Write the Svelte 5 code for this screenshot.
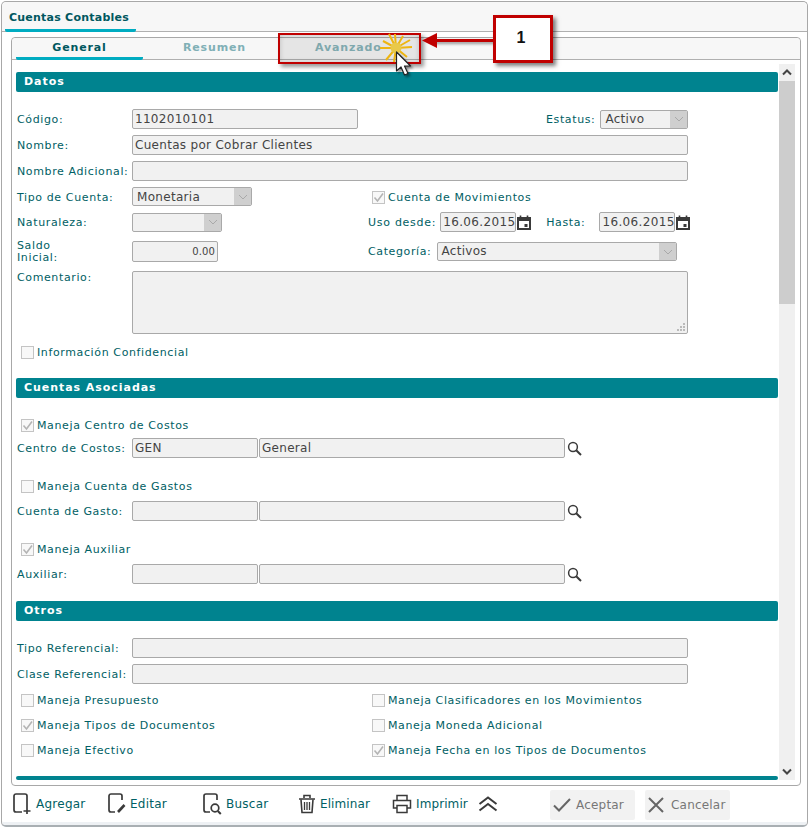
<script>
  const iconC = '#3a3a3a';
</script>

{#snippet check(label, on)}
  <label class="chk">
    <span class="box">
      {#if on}
        <svg width="13" height="13" viewBox="0 0 13 13"><path d="M2.5 6.5 L5.5 10 L11 2.5" fill="none" stroke="#b4b4b4" stroke-width="1.6"/></svg>
      {/if}
    </span>
    <span>{label}</span>
  </label>
{/snippet}

{#snippet caret()}
  <span class="caret"><svg width="10" height="6" viewBox="0 0 10 6"><path d="M1 1 L5 5 L9 1" fill="none" stroke="#a9a9a9" stroke-width="1"/></svg></span>
{/snippet}

{#snippet cal()}
  <svg class="cal" width="14" height="15" viewBox="0 0 14 15">
    <path d="M1 3h12v11H1z" fill="none" stroke={iconC} stroke-width="2"/>
    <path d="M1 3h12v3H1z" fill={iconC}/>
    <path d="M3.5 0.5v3M10.5 0.5v3" stroke={iconC} stroke-width="1.6"/>
    <rect x="7.5" y="9" width="3" height="3" fill={iconC}/>
  </svg>
{/snippet}

{#snippet lens()}
  <svg class="lens" width="15" height="15" viewBox="0 0 15 15">
    <circle cx="6" cy="6" r="4.4" fill="none" stroke={iconC} stroke-width="1.5"/>
    <path d="M9.2 9.2 L14 14" stroke={iconC} stroke-width="2"/>
  </svg>
{/snippet}

<div class="window">
  <div class="tabs-top"><span class="top-tab">Cuentas Contables</span></div>

  <div class="panel">
    <div class="tabs">
      <span class="tab active">General</span>
      <span class="tab res">Resumen</span>
      <span class="tab adv">Avanzado</span>
    </div>

    <div class="scrollarea">
      <div class="content">
        <h3 class="bar">Datos</h3>

        <div class="row first">
          <span class="lab">Código:</span>
          <span class="in w226">1102010101</span>
          <span class="lab est">Estatus:</span>
          <span class="in sel w88 short">Activo{@render caret()}</span>
        </div>
        <div class="row"><span class="lab">Nombre:</span><span class="in w556">Cuentas por Cobrar Clientes</span></div>
        <div class="row"><span class="lab">Nombre Adicional:</span><span class="in w556"></span></div>
        <div class="row short-row">
          <span class="lab">Tipo de Cuenta:</span>
          <span class="in sel w120 short">Monetaria{@render caret()}</span>
          <span class="rightcol">{@render check('Cuenta de Movimientos', true)}</span>
        </div>
        <div class="row nat">
          <span class="lab">Naturaleza:</span>
          <span class="in sel w90 short">{@render caret()}</span>
          <span class="lab uso">Uso desde:</span>
          <span class="in date">16.06.2015</span>{@render cal()}
          <span class="lab hasta">Hasta:</span>
          <span class="in date">16.06.2015</span>{@render cal()}
        </div>
        <div class="row saldo">
          <span class="lab two">Saldo<br />Inicial:</span>
          <span class="in num">0.00</span>
          <span class="lab cat">Categoría:</span>
          <span class="in sel w240 short">Activos{@render caret()}</span>
        </div>
        <div class="row area-row">
          <span class="lab">Comentario:</span>
          <span class="in w556 area">
            <svg class="grip" width="10" height="10" viewBox="0 0 10 10" fill="#bbb"><rect x="7" y="1" width="2" height="2"/><rect x="4" y="4" width="2" height="2"/><rect x="7" y="4" width="2" height="2"/><rect x="1" y="7" width="2" height="2"/><rect x="4" y="7" width="2" height="2"/><rect x="7" y="7" width="2" height="2"/></svg>
          </span>
        </div>
        <div class="chkrow conf">{@render check('Información Confidencial', false)}</div>

        <h3 class="bar asoc">Cuentas Asociadas</h3>

        <div class="chkrow m1">{@render check('Maneja Centro de Costos', true)}</div>
        <div class="row tight">
          <span class="lab">Centro de Costos:</span>
          <span class="in w126">GEN</span><span class="in w306">General</span>{@render lens()}
        </div>
        <div class="chkrow m2">{@render check('Maneja Cuenta de Gastos', false)}</div>
        <div class="row tight2">
          <span class="lab">Cuenta de Gasto:</span>
          <span class="in w126"></span><span class="in w306"></span>{@render lens()}
        </div>
        <div class="chkrow m3">{@render check('Maneja Auxiliar', true)}</div>
        <div class="row tight2">
          <span class="lab">Auxiliar:</span>
          <span class="in w126"></span><span class="in w306"></span>{@render lens()}
        </div>

        <h3 class="bar otros">Otros</h3>

        <div class="row first"><span class="lab">Tipo Referencial:</span><span class="in w556"></span></div>
        <div class="row"><span class="lab">Clase Referencial:</span><span class="in w556"></span></div>
        <div class="two-col c1">
          {@render check('Maneja Presupuesto', false)}
          {@render check('Maneja Clasificadores en los Movimientos', false)}
        </div>
        <div class="two-col">
          {@render check('Maneja Tipos de Documentos', true)}
          {@render check('Maneja Moneda Adicional', false)}
        </div>
        <div class="two-col">
          {@render check('Maneja Efectivo', false)}
          {@render check('Maneja Fecha en los Tipos de Documentos', true)}
        </div>
        <div class="bar last"></div>
      </div>

      <div class="scrollbar">
        <span class="sbtn"><svg width="10" height="7" viewBox="0 0 10 7"><path d="M1 5.5 L5 1.5 L9 5.5" fill="none" stroke="#444" stroke-width="2"/></svg></span>
        <span class="thumb"></span>
        <span class="track"></span>
        <span class="sbtn"><svg width="10" height="7" viewBox="0 0 10 7"><path d="M1 1.5 L5 5.5 L9 1.5" fill="none" stroke="#444" stroke-width="2"/></svg></span>
      </div>
    </div>
  </div>

  <div class="toolbar">
    <span class="act a-add">
      <svg width="18" height="22" viewBox="0 0 18 22"><path d="M14 14V3a2 2 0 0 0-2-2H3a2 2 0 0 0-2 2v14a2 2 0 0 0 2 2h6" fill="none" stroke={iconC} stroke-width="1.7"/><path d="M14 14v7M10.500 18h7" stroke={iconC} stroke-width="1.7"/></svg>
      Agregar
    </span>
    <span class="act a-edit">
      <svg width="18" height="22" viewBox="0 0 18 22"><path d="M14 7V3a2 2 0 0 0-2-2H3a2 2 0 0 0-2 2v14a2 2 0 0 0 2 2h4" fill="none" stroke={iconC} stroke-width="1.7"/><path d="M10 19l6.500-7" stroke={iconC} stroke-width="2.600"/></svg>
      Editar
    </span>
    <span class="act a-find">
      <svg width="20" height="22" viewBox="0 0 20 22"><path d="M15 7V3a2 2 0 0 0-2-2H4a2 2 0 0 0-2 2v14a2 2 0 0 0 2 2h4" fill="none" stroke={iconC} stroke-width="1.7"/><circle cx="13" cy="15" r="3.800" fill="none" stroke={iconC} stroke-width="1.700"/><path d="M15.800 18l3 3" stroke={iconC} stroke-width="2"/></svg>
      Buscar
    </span>
    <span class="act a-del">
      <svg width="18" height="20" viewBox="0 0 18 20"><path d="M1 5h16M6 4V1.500h6V4" fill="none" stroke={iconC} stroke-width="1.600"/><path d="M3 5.500l1 13h10l1-13" fill="none" stroke={iconC} stroke-width="1.600"/><path d="M6.500 8v8M9 8v8M11.500 8v8" stroke={iconC} stroke-width="1.300"/></svg>
      Eliminar
    </span>
    <span class="act a-print">
      <svg width="20" height="20" viewBox="0 0 20 20"><path d="M5 6V1.500h10V6M5 14H1.500V6.500h17V14H15" fill="none" stroke={iconC} stroke-width="1.500"/><path d="M5 11.500h10v7H5z" fill="none" stroke={iconC} stroke-width="1.500"/></svg>
      Imprimir
    </span>
    <svg class="chev" width="20" height="16" viewBox="0 0 20 16"><path d="M1.500 8 L10 1.500 L18.500 8M1.500 14.500 L10 8 L18.500 14.500" fill="none" stroke={iconC} stroke-width="2"/></svg>
    <span class="btn ok">
      <svg width="18" height="14" viewBox="0 0 18 14"><path d="M1 7.500 L6 12.500 L17 1" fill="none" stroke="#666" stroke-width="2"/></svg>
      Aceptar
    </span>
    <span class="btn">
      <svg width="16" height="16" viewBox="0 0 16 16"><path d="M1 1L15 15M15 1L1 15" stroke="#666" stroke-width="2"/></svg>
      Cancelar
    </span>
  </div>
</div>

<!-- tutorial annotations laid over the screenshot -->
<div class="hl"></div>
<div class="arrow-line"></div>
<svg class="arrow-head" width="15" height="15" viewBox="0 0 15 15"><path d="M0 7.500 L15 0 V15Z" fill="#c00000"/></svg>
<div class="callout">1</div>
<svg class="star" width="34" height="30" viewBox="0 0 34 30">
  <path d="M17 15 L1 15 M17 15 L33 14 M17 15 L10 1 M17 15 L24 3 M17 15 L7 27 M17 15 L28 24 M17 15 L4 8 M17 15 L31 7 M17 15 L15 29 M17 15 L16 1" stroke="#eeb511" stroke-width="2"/>
  <circle cx="17" cy="15" r="5.500" fill="#e9c94a"/>
</svg>
<svg class="cursor" width="20" height="26" viewBox="0 0 20 26">
  <path d="M1.500 1 V20 L6 16 L9.500 24 L13 22.500 L9.500 15 H15.500 Z" fill="#fff" stroke="#222" stroke-width="1.200" stroke-linejoin="round"/>
</svg>

<style>
  :global(body) { margin: 0; background: #fff; }
  .window {
    position: relative;
    box-sizing: border-box;
    width: 807px;
    height: 826px;
    margin: 1px 0 0 1px;
    border: 1px solid #a8a8a8;
    border-bottom: 2px solid #a9afb3;
    border-radius: 5px;
    background: #fff;
    font: 11px "DejaVu Sans", sans-serif;
    color: #006064;
  }
  .tabs-top {
    height: 29px;
    background: #f7f7f7;
    border-bottom: 1px solid #b0b0b0;
    border-radius: 5px 5px 0 0;
    display: flex;
    align-items: flex-end;
    padding-left: 3px;
  }
  .top-tab {
    height: 18px;
    padding: 0 6px 0 4px;
    width: 121px;
    font-weight: bold;
    font-size: 11px;
    letter-spacing: 0.23px;
    white-space: nowrap;
    color: #00575f;
    border-bottom: 3px solid #00acc1;
    border-radius: 0 0 2px 2px;
    margin-bottom: -1px;
  }
  .panel {
    box-sizing: border-box;
    width: 790px;
    height: 749px;
    margin: 5px 0 0 9px;
    border: 1px solid #a8a8a8;
    border-radius: 4px;
  }
  .tabs {
    height: 21px;
    background: #f7f7f7;
    border-bottom: 1px solid #b0b0b0;
    border-radius: 4px 4px 0 0;
    display: flex;
    padding-left: 4px;
  }
  .tab {
    box-sizing: border-box;
    width: 127px;
    height: 22px;
    padding-top: 3px;
    text-align: center;
    font-weight: bold;
    letter-spacing: 0.85px;
    color: #80b0b6;
  }
  .tab.res { width: 143px; }
  .tab.active {
    color: #00575f;
    border-bottom: 3px solid #00acc1;
    border-radius: 0 0 2px 2px;
  }
  .tab.adv { width: 120px; padding-left: 29px; text-align: left; }
  .scrollarea { position: relative; display: flex; height: 726px; padding-left: 4px; }
  .content { width: 762px; height: 720px; padding-top: 12px; box-sizing: border-box; overflow: hidden; }
  .bar {
    box-sizing: border-box;
    margin: 0;
    height: 20px;
    background: #00838f;
    color: #fff;
    font-size: 11px;
    font-weight: bold;
    letter-spacing: 0.95px;
    line-height: 20px;
    padding-left: 8px;
    border-radius: 2px;
  }
  .bar.asoc { margin-top: 19px; }
  .bar.otros { margin-top: 17px; }
  .bar.last { margin-top: 19px; height: 4px; }
  .row { display: flex; align-items: center; height: 20px; margin-top: 6px; padding-left: 1px; }
  .row.first { margin-top: 17px; }
  .row.nat { margin-top: 5px; }
  .row.saldo { height: 21px; margin-top: 9px; }
  .row.area-row { height: 63px; margin-top: 9px; align-items: flex-start; }
  .row.tight { margin-top: 6px; }
  .row.tight2 { margin-top: 8px; }
  .short-row .in { align-self: flex-start; line-height: 18px; }
  .lab {
    box-sizing: border-box;
    width: 115px;
    flex: none;
    letter-spacing: 0.62px;
    white-space: nowrap;
  }
  .lab.two { line-height: 12px; }
  .lab.est { width: auto; margin-left: 188px; margin-right: 5px; }
  .lab.uso { width: auto; margin-left: 146px; margin-right: 4px; letter-spacing: 0.72px; }
  .lab.hasta { width: auto; margin-left: 15px; margin-right: 14px; }
  .lab.cat { width: auto; margin-left: 150px; margin-right: 6px; }
  .in {
    position: relative;
    display: block;
    box-sizing: border-box;
    flex: none;
    height: 20px;
    border: 1px solid #a9a9a9;
    border-radius: 2px;
    background: #f1f1f1;
    color: #444;
    font-size: 12px;
    line-height: 18px;
    padding-left: 2px;
    letter-spacing: 0.3px;
    white-space: nowrap;
    overflow: hidden;
  }
  .short { height: 19px; line-height: 17px; padding-left: 4px; }
  .w240.short { padding-left: 3px; }
  .sel { padding-right: 18px; }
  .caret {
    position: absolute;
    right: 0;
    top: 0;
    bottom: 0;
    width: 17px;
    background: #cfcfcf;
    display: flex;
    align-items: center;
    justify-content: center;
  }
  .w226 { width: 226px; }
  .w556 { width: 556px; }
  .w88 { width: 88px; }
  .w90 { width: 90px; }
  .w120 { width: 120px; }
  .w240 { width: 240px; }
  .w126 { width: 126px; }
  .w306 { width: 306px; margin-left: 1px; }
  .date { width: 76px; letter-spacing: 0.36px; }
  .num { width: 86px; height: 21px; text-align: right; font-size: 10px; padding-right: 2px; line-height: 19px; letter-spacing: 0.15px; }
  .area { height: 63px; }
  .grip { position: absolute; right: 1px; bottom: 1px; }
  .cal { margin-left: 1px; flex: none; }
  .lens { margin-left: 2px; flex: none; }
  .rightcol { margin-left: 120px; }
  .chk { display: flex; align-items: center; gap: 3px; letter-spacing: 0.62px; white-space: nowrap; }
  .box {
    box-sizing: border-box;
    width: 13px;
    height: 13px;
    border: 1px solid #c4c4c4;
    background: #f8f8f8;
    display: block;
    flex: none;
  }
  .box svg { display: block; margin: -1px; }
  .chkrow { padding-left: 5px; height: 14px; display: flex; align-items: center; }
  .conf { margin-top: 11px; }
  .m1 { margin-top: 20px; }
  .m2 { margin-top: 21px; }
  .m3 { margin-top: 21px; }
  .two-col { display: grid; grid-template-columns: 351px auto; padding-left: 5px; height: 14px; margin-top: 11px; align-items: center; }
  .two-col.c1 { margin-top: 9px; }
  .scrollbar { width: 16px; height: 716px; display: flex; flex-direction: column; margin: 4px 0 0 1px; background: #f0f0f0; }
  .sbtn { height: 17px; display: flex; align-items: center; justify-content: center; background: #f0f0f0; flex: none; }
  .thumb { height: 223px; background: #cdcdcd; flex: none; }
  .track { flex: 1; }
  .toolbar { position: relative; box-sizing: border-box; height: 39px; border-bottom: 3px solid #eef1f4; border-radius: 0 0 4px 4px; }
  .act { position: absolute; top: 6px; display: flex; align-items: center; gap: 5px; font-size: 12px; letter-spacing: 0.25px; height: 24px; }
  .a-add { left: 11px; }
  .a-edit { left: 106px; gap: 4px; }
  .a-find { left: 200px; gap: 4px; }
  .a-del { left: 296px; }
  .a-print { left: 390px; }
  .a-del, .a-print { gap: 4px; letter-spacing: 0.1px; }
  .chev { position: absolute; left: 476px; top: 10px; }
  .btn {
    position: absolute;
    top: 4px;
    box-sizing: border-box;
    width: 85px;
    height: 30px;
    left: 643px;
    background: #f2f2f2;
    border-radius: 2px;
    color: #777;
    font-size: 12px;
    display: flex;
    align-items: center;
    gap: 7px;
    padding-left: 3px;
    letter-spacing: 0.2px;
  }
  .btn.ok { left: 548px; gap: 5px; }
  .hl {
    position: absolute;
    left: 278px;
    top: 33px;
    width: 143px;
    height: 31px;
    box-sizing: border-box;
    border: 2px solid #c00000;
    box-shadow: 3px 3px 4px rgba(0,0,0,.4), inset 0 0 5px rgba(0,0,0,.18);
    background: rgba(120,120,120,.14);
  }
  .arrow-line {
    position: absolute;
    left: 430px;
    top: 39px;
    width: 64px;
    height: 3px;
    background: #c00000;
    box-shadow: 2px 2px 3px rgba(0,0,0,.4);
  }
  .arrow-head { position: absolute; left: 422px; top: 33px; }
  .callout {
    position: absolute;
    left: 493px;
    top: 15px;
    width: 60px;
    height: 48px;
    box-sizing: border-box;
    border: 3px solid #c00000;
    background: #fff;
    box-shadow: 3px 3px 4px rgba(0,0,0,.5);
    font: bold 16px "Liberation Sans", sans-serif;
    color: #111;
    display: flex;
    align-items: center;
    justify-content: center;
    padding: 0 4px 3px 0;
  }
  .star { position: absolute; left: 379px; top: 33px; }
  .cursor { position: absolute; left: 395px; top: 51px; filter: drop-shadow(2px 2px 1px rgba(0,0,0,.4)); }
</style>
